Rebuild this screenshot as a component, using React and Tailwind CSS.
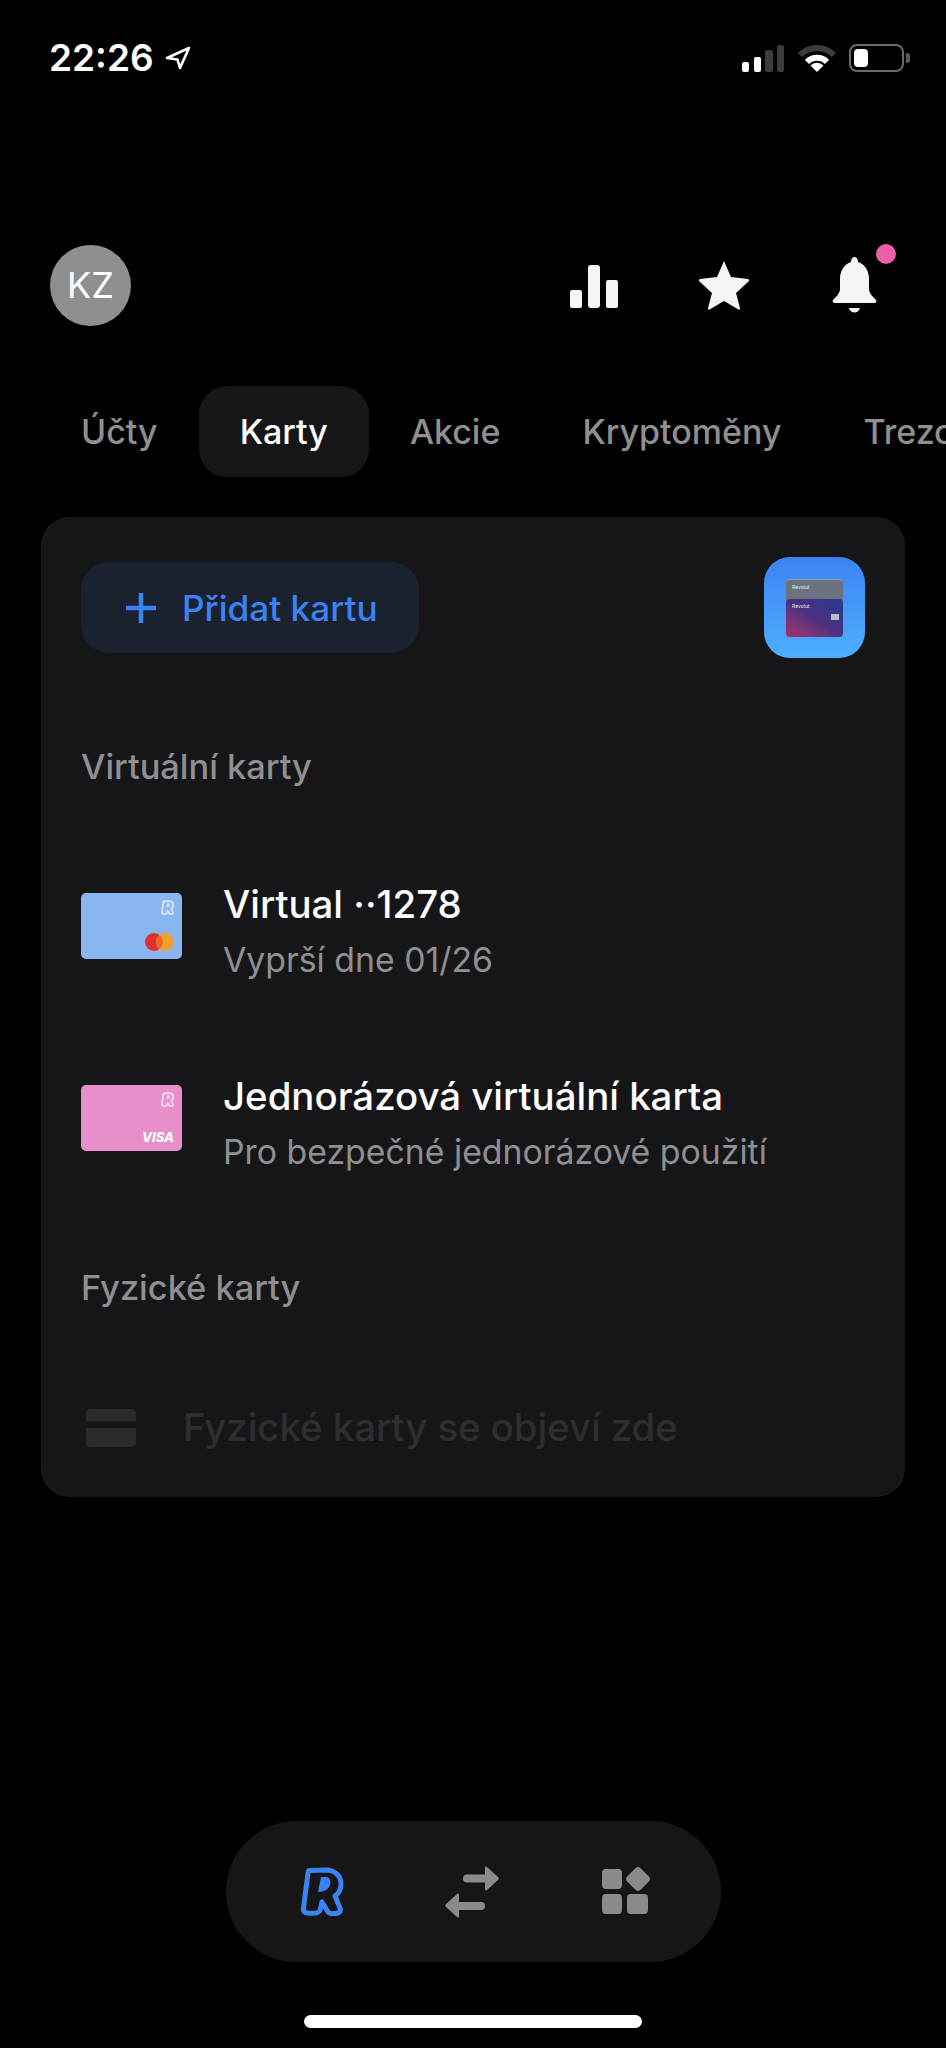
import React from "react";

const RPath = "M9 3.5 L26 3 C35 3 41 9 41 17 C41 23 38 27 35 29 L40 41 C41 44 40 45 38 46 C34 47 30 47 28 45 L22 35 L20 43 C19 46 16 47 8 46 C4 46 3 44 3.5 41 L8 6 C8.3 4 8.5 3.5 9 3.5 Z";
const RInner = "M21 10 L26 10 C30 10 31 14 30 18 C29 22 24 25 18 25 Z";

function SmallR() {
  return (
    <svg width="13" height="15" viewBox="0 0 44 49" className="opacity-60">
      <path d={RPath} fill="none" stroke="#fff" strokeWidth="7" strokeLinejoin="round" />
      <path d={RInner} fill="#fff" />
    </svg>
  );
}

function StatusBar() {
  return (
    <div className="flex items-center justify-between h-[28px] mt-[44px] pl-[49px] pr-[36px]">
      <div className="flex items-center gap-[11px]">
        <span className="text-[37px] leading-[28px] font-semibold text-white">22:26</span>
        <svg width="26" height="24" viewBox="0 0 26 24">
          <path d="M24 2 L2 12 L12.5 13.5 L15 22 Z" fill="none" stroke="#fff" strokeWidth="2.6" strokeLinejoin="round" />
        </svg>
      </div>
      <div className="flex items-center">
        <svg width="42" height="28" viewBox="0 0 42 28">
          <rect x="0" y="18" width="7" height="10" rx="2" fill="#fff" />
          <rect x="12" y="13" width="7" height="15" rx="2" fill="#fff" />
          <rect x="23" y="6" width="8" height="22" rx="2" fill="#3c3c3c" />
          <rect x="35" y="1" width="7" height="27" rx="2" fill="#3c3c3c" />
        </svg>
        <svg width="38" height="28" viewBox="0 0 38 28" className="ml-[14px]">
          <path d="M2 11 A24 24 0 0 1 36 11" fill="none" stroke="#3c3c3c" strokeWidth="6" />
          <path d="M9 18 A14 14 0 0 1 29 18" fill="none" stroke="#fff" strokeWidth="6" />
          <path d="M19 28 L12.5 21.5 A9 9 0 0 1 25.5 21.5 Z" fill="#fff" />
        </svg>
        <div className="ml-[13px] w-[55px] h-[28px] rounded-[8px] border-2 border-[#6b6b6b] p-[3px]">
          <div className="w-[14px] h-full rounded-[4px] bg-white" />
        </div>
        <div className="ml-[2px] w-[4px] h-[10px] rounded-r-[3px] bg-[#5a5a5a]" />
      </div>
    </div>
  );
}

function Header() {
  return (
    <div className="flex items-center justify-between h-[80px] mt-[173px] pl-[50px] pr-[69px]">
      <div className="flex items-center justify-center w-[81px] h-[81px] rounded-full bg-[#8f8f91] text-white text-[36px]">KZ</div>
      <div className="flex items-center">
        <svg width="48" height="43" viewBox="0 0 48 43" className="mt-[3px]">
          <rect x="0" y="25" width="12" height="18" rx="2" fill="#f5f5f5" />
          <rect x="18" y="0" width="12" height="43" rx="3" fill="#f5f5f5" />
          <rect x="36" y="15" width="12" height="28" rx="2" fill="#f5f5f5" />
        </svg>
        <svg width="52" height="50" viewBox="0 0 52 50" className="ml-[80px]">
          <path d="M26 1 L33 17 L50 19 C51.5 19.3 51.5 20.5 50.5 21.5 L38 33 L42 48 C42.3 49.5 41 50 40 49.3 L26 41 L12 49.3 C11 50 9.7 49.5 10 48 L14 33 L1.5 21.5 C0.5 20.5 0.5 19.3 2 19 L19 17 Z" fill="#f5f5f5" strokeLinejoin="round" />
        </svg>
        <div className="relative ml-[82px] w-[45px] h-[56px]">
          <svg width="45" height="56" viewBox="0 0 45 56">
            <path d="M22.5 0 C24.5 0 26 2 26 5 C33 7 37 14 37 22 L37 32 C37 36 41 40 44 43 C45 45 44 46 42 46 L3 46 C1 46 0 45 1 43 C4 40 8 36 8 32 L8 22 C8 14 12 7 19 5 C19 2 20.5 0 22.5 0 Z" fill="#f5f5f5" />
            <path d="M17 51 L28 51 C27 54 25 55.5 22.5 55.5 C20 55.5 18 54 17 51 Z" fill="#f5f5f5" />
          </svg>
          <div className="absolute -top-[13px] -right-[19px] w-[20px] h-[20px] rounded-full bg-[#ec5fa8]" />
        </div>
      </div>
    </div>
  );
}

function Tabs() {
  const tabs = ["Účty", "Karty", "Akcie", "Kryptoměny", "Trezory"];
  return (
    <div className="flex mt-[61px] pl-[40px] overflow-hidden">
      {tabs.map((t) => (
        <div
          key={t}
          className={
            t === "Karty"
              ? "shrink-0 flex items-center h-[91px] px-[41px] rounded-[28px] bg-[#161618] text-white text-[34px] font-medium"
              : "shrink-0 flex items-center h-[91px] px-[41px] text-[#8f8f91] text-[34px] font-medium"
          }
        >
          {t}
        </div>
      ))}
    </div>
  );
}

function AppIcon() {
  return (
    <div className="flex flex-col items-center justify-center w-[101px] h-[101px] rounded-[26px] bg-gradient-to-b from-[#3d83f3] to-[#4eaefc]">
      <div className="w-[57px] h-[58px] flex flex-col">
        <div className="h-[24px] -mb-[4px] rounded-t-[4px] bg-[#6c7380] pl-[6px] pt-[3px] text-[5px] leading-[8px] text-[#e8e8e8] border-t border-[#9aa0aa]">Revolut</div>
        <div className="h-[38px] rounded-[4px] bg-gradient-to-tr from-[#ad2868] via-[#4b3080] to-[#203a90] pl-[6px] pt-[3px] text-[5px] leading-[8px] text-[#e8e8e8] flex flex-col">
          <span>Revolut</span>
          <span className="self-end mr-[4px] mt-[4px] w-[8px] h-[6px] bg-[#b8bcc8]" />
        </div>
      </div>
    </div>
  );
}

function Thumb({ type }) {
  const bg = type === "mc" ? "bg-[#8ab6ef]" : "bg-[#e78fca]";
  return (
    <div className={"shrink-0 mt-[11px] w-[101px] h-[66px] rounded-[5px] flex flex-col items-end justify-between pt-[7px] pr-[8px] pb-[8px] " + bg}>
      <SmallR />
      {type === "mc" ? (
        <svg width="29" height="18" viewBox="0 0 29 18">
          <circle cx="9" cy="9" r="9" fill="#e0312a" />
          <circle cx="20" cy="9" r="9" fill="#f0a030" />
          <path d="M14.5 1.9 A9 9 0 0 1 14.5 16.1 A9 9 0 0 1 14.5 1.9 Z" fill="#f2682a" />
        </svg>
      ) : (
        <span className="text-[13px] leading-[12px] font-extrabold italic text-white">VISA</span>
      )}
    </div>
  );
}

function Row({ type, title, sub, className }) {
  return (
    <div className={"flex items-start gap-[41px] " + className}>
      <Thumb type={type} />
      <div className="flex flex-col gap-[12px]">
        <div className="text-[38.4px] leading-[44px] font-[450] text-white">{title}</div>
        <div className="text-[33.8px] leading-[44px] text-[#8f8f91]">{sub}</div>
      </div>
    </div>
  );
}

function Card() {
  return (
    <div className="mt-[40px] mx-[41px] rounded-[28px] bg-[#161618] pt-[40px] pb-[47px] pl-[40px] pr-[40px]">
      <div className="flex items-center justify-between">
        <div className="flex items-center w-[338px] h-[91px] rounded-[28px] bg-[#19222e] pl-[45px] text-[#3b82f6] text-[35.2px] font-medium">
          <svg width="30" height="30" viewBox="0 0 30 30">
            <path d="M15 1 V29 M1 15 H29" stroke="#3b82f6" strokeWidth="4.5" strokeLinecap="round" />
          </svg>
          <span className="ml-[26px] mt-[2px]">Přidat kartu</span>
        </div>
        <AppIcon />
      </div>
      <div className="mt-[89px] text-[34.4px] leading-[40px] font-medium text-[#8f8f91]">Virtuální karty</div>
      <Row className="mt-[95px]" type="mc" title="Virtual ··1278" sub="Vyprší dne 01/26" />
      <Row className="mt-[92px]" type="visa" title="Jednorázová virtuální karta" sub="Pro bezpečné jednorázové použití" />
      <div className="mt-[94px] text-[34.4px] leading-[40px] font-medium text-[#8f8f91]">Fyzické karty</div>
      <div className="mt-[98px] flex items-center h-[44px] pl-[5px]">
        <svg width="50" height="38" viewBox="0 0 50 38">
          <path d="M0 12 V5 C0 2 2 0 5 0 H45 C48 0 50 2 50 5 V12 Z M0 19 H50 V33 C50 36 48 38 45 38 H5 C2 38 0 36 0 33 Z" fill="#2a2a2c" />
        </svg>
        <span className="ml-[47px] -mt-[1px] text-[38.3px] font-medium text-[#2e2e30]">Fyzické karty se objeví zde</span>
      </div>
    </div>
  );
}

function BottomNav() {
  return (
    <div className="mt-[324px] ml-[226px] w-[495px] h-[141px] rounded-full bg-[#161616] flex items-center pl-[74px]">
      <svg width="44" height="49" viewBox="0 0 44 49">
        <path d={RPath} fill="#161616" stroke="#3b82f6" strokeWidth="5" strokeLinejoin="round" />
        <path d={RInner} fill="#3b82f6" />
      </svg>
      <svg width="54" height="52" viewBox="0 0 54 52" className="ml-[101px]">
        <path d="M22 12.5 H40" stroke="#8a8a8a" strokeWidth="8" strokeLinecap="round" />
        <path d="M40 1.5 C40 0.3 41 0 42 1 L53 11 C54 12 54 13 53 14 L42 24 C41 25 40 24.7 40 23.5 Z" fill="#8a8a8a" />
        <path d="M36 40 H14" stroke="#8a8a8a" strokeWidth="8" strokeLinecap="round" />
        <path d="M14 28.5 C14 27.3 13 27 12 28 L1 38 C0 39 0 40 1 41 L12 51 C13 52 14 51.7 14 50.5 Z" fill="#8a8a8a" />
      </svg>
      <svg width="48" height="48" viewBox="0 0 48 48" className="ml-[103px] mb-[3px]">
        <rect x="0" y="3" width="20" height="20" rx="4" fill="#8a8a8a" />
        <rect x="0" y="28" width="20" height="20" rx="4" fill="#8a8a8a" />
        <rect x="25" y="28" width="21" height="20" rx="4" fill="#8a8a8a" />
        <rect x="26.5" y="3.5" width="19" height="19" rx="4" fill="#8a8a8a" transform="rotate(45 36 13)" />
      </svg>
    </div>
  );
}

export default function App() {
  return (
    <div className="w-[946px] h-[2048px] overflow-hidden bg-black flex flex-col [font-family:Inter,sans-serif]">
      <StatusBar />
      <Header />
      <Tabs />
      <Card />
      <BottomNav />
      <div className="mt-[53px] ml-[304px] w-[338px] h-[13px] rounded-full bg-white" />
    </div>
  );
}
